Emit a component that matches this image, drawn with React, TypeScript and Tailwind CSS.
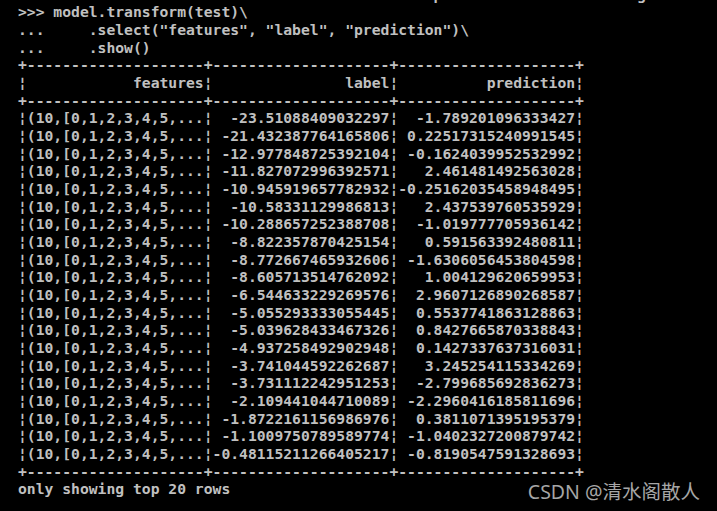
const rows: [string, string][] = [
  ["-23.51088409032297", "-1.789201096333427"],
  ["-21.432387764165806", "0.22517315240991545"],
  ["-12.977848725392104", "-0.1624039952532992"],
  ["-11.827072996392571", "2.461481492563028"],
  ["-10.945919657782932", "-0.25162035458948495"],
  ["-10.58331129986813", "2.437539760535929"],
  ["-10.288657252388708", "-1.019777705936142"],
  ["-8.822357870425154", "0.591563392480811"],
  ["-8.772667465932606", "-1.6306056453804598"],
  ["-8.605713514762092", "1.004129620659953"],
  ["-6.544633229269576", "2.9607126890268587"],
  ["-5.055293333055445", "0.5537741863128863"],
  ["-5.039628433467326", "0.8427665870338843"],
  ["-4.937258492902948", "0.1427337637316031"],
  ["-3.741044592262687", "3.245254115334269"],
  ["-3.731112242951253", "-2.799685692836273"],
  ["-2.109441044710089", "-2.2960416185811696"],
  ["-1.8722161156986976", "0.3811071395195379"],
  ["-1.1009750789589774", "-1.0402327200879742"],
  ["-0.48115211266405217", "-0.8190547591328693"],
];

const sep = "+" + "-".repeat(20) + "+" + "-".repeat(20) + "+" + "-".repeat(20) + "+";
const cell = (s: string) => s.padStart(20, " ");

const lines: string[] = [
  " ".repeat(47) + "p" + " ".repeat(22) + "g",
  '>>> model.transform(test)\\',
  '...     .select("features", "label", "prediction")\\',
  "...     .show()",
  sep,
  "¦" + cell("features") + "¦" + cell("label") + "¦" + cell("prediction") + "¦",
  sep,
  ...rows.map(([l, p]) => "¦" + cell("(10,[0,1,2,3,4,5,...") + "¦" + cell(l) + "¦" + cell(p) + "¦"),
  sep,
  "only showing top 20 rows",
];

export default function App() {
  return (
    <div className="relative h-[511px] w-full overflow-hidden bg-black">
      <div
        className="-mt-[14.5px] pl-[18px] text-[14.7px] font-bold leading-[17.67px] text-[#c0c0c0]"
        style={{ fontFamily: '"DejaVu Sans Mono", monospace' }}
      >
        {lines.map((line, i) => (
          <div key={i} className="whitespace-pre">
            {line}
          </div>
        ))}
      </div>
      <div
        className="absolute right-[17px] bottom-[10px] text-[19.5px] leading-none text-[#a6a6a6]"
        style={{ fontFamily: '"Noto Sans", "Noto Sans CJK SC", sans-serif' }}
      >
        CSDN @清水阁散人
      </div>
    </div>
  );
}
